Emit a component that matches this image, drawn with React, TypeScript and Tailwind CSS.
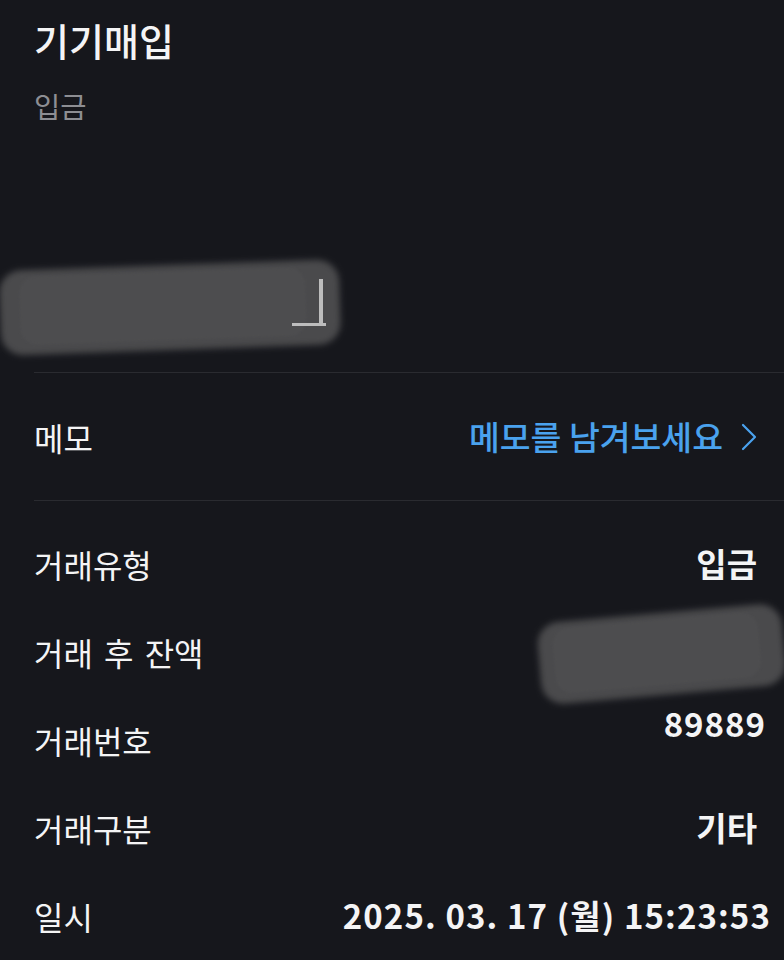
import React from "react";

const FONT = "font-['Noto_Sans_CJK_KR','Noto_Sans',sans-serif]";

type Row = { label: string; value?: string; kind?: "smear" | "raised" | "wide" };

const rows: Row[] = [
  { label: "거래유형", value: "입금" },
  { label: "거래 후 잔액", kind: "smear" },
  { label: "거래번호", value: "89889", kind: "raised" },
  { label: "거래구분", value: "기타" },
  { label: "일시", value: "2025. 03. 17 (월) 15:23:53", kind: "wide" },
];

const Smear: React.FC<{ className: string }> = ({ className }) => (
  <div className={`relative ${className}`}>
    <div className="absolute inset-0 rounded-[22px] bg-[#4a4a4c] blur-[3px]" />
    <div className="absolute left-[6%] right-[10%] top-[8%] bottom-[12%] rounded-[16px] bg-[#4d4d4f] blur-[1px]" />
  </div>
);

const App: React.FC = () => {
  return (
    <div className={`min-h-screen w-full bg-[#16171c] text-[#f4f4f5] overflow-hidden ${FONT}`}>
      <div className="pl-[34px] pr-[27px] pt-[17px]">
        <h1 className="text-[38px] leading-[46px] font-medium">기기매입</h1>
        <p className="mt-[24px] text-[28.5px] leading-[38px] text-[#8d8e93]">입금</p>

        {/* 가려진 금액 */}
        <div className="relative -ml-[34px] mt-[140px] h-[85px] w-[340px]">
          <Smear className="h-full w-full -rotate-[2deg]" />
          <div className="absolute left-[319px] top-[14px] h-[44px] w-[4px] bg-[#d9d9d9] opacity-80" />
          <div className="absolute left-[292px] top-[58px] h-[3px] w-[34px] bg-[#d9d9d9] opacity-80" />
        </div>

        <div className="mt-[22px] -mr-[27px] h-px bg-[#2a2b30]" />

        <div className="flex h-[127px] items-center justify-between">
          <span className="text-[32px]">메모</span>
          <button className="flex items-center gap-[18px] text-[33.5px] font-medium text-[#4aa2ee]">
            메모를 남겨보세요
            <svg width="16" height="28" viewBox="0 0 16 28" fill="none">
              <polyline points="2,2 14,14 2,26" stroke="#4aa2ee" strokeWidth="2.2" strokeLinecap="round" strokeLinejoin="round" />
            </svg>
          </button>
        </div>

        <div className="-mr-[27px] h-px bg-[#2a2b30]" />

        <div className="pt-[19px]">
          {rows.map((r) => (
            <div key={r.label} className="flex h-[88px] items-center justify-between">
              <span className="text-[32px] [word-spacing:4px]">{r.label}</span>
              {r.kind === "smear" ? (
                <Smear className="-mr-[27px] mt-[4px] h-[82px] w-[245px] -rotate-[5deg]" />
              ) : (
                <span
                  className={`text-[33px] font-bold ${r.kind === "raised" ? "mb-[32px] mr-[-9px] tracking-[1px]" : ""} ${
                    r.kind === "wide" ? "-mr-[14px] tracking-[1.1px]" : ""
                  }`}
                >
                  {r.value}
                </span>
              )}
            </div>
          ))}
        </div>
      </div>
    </div>
  );
};

export default App;
